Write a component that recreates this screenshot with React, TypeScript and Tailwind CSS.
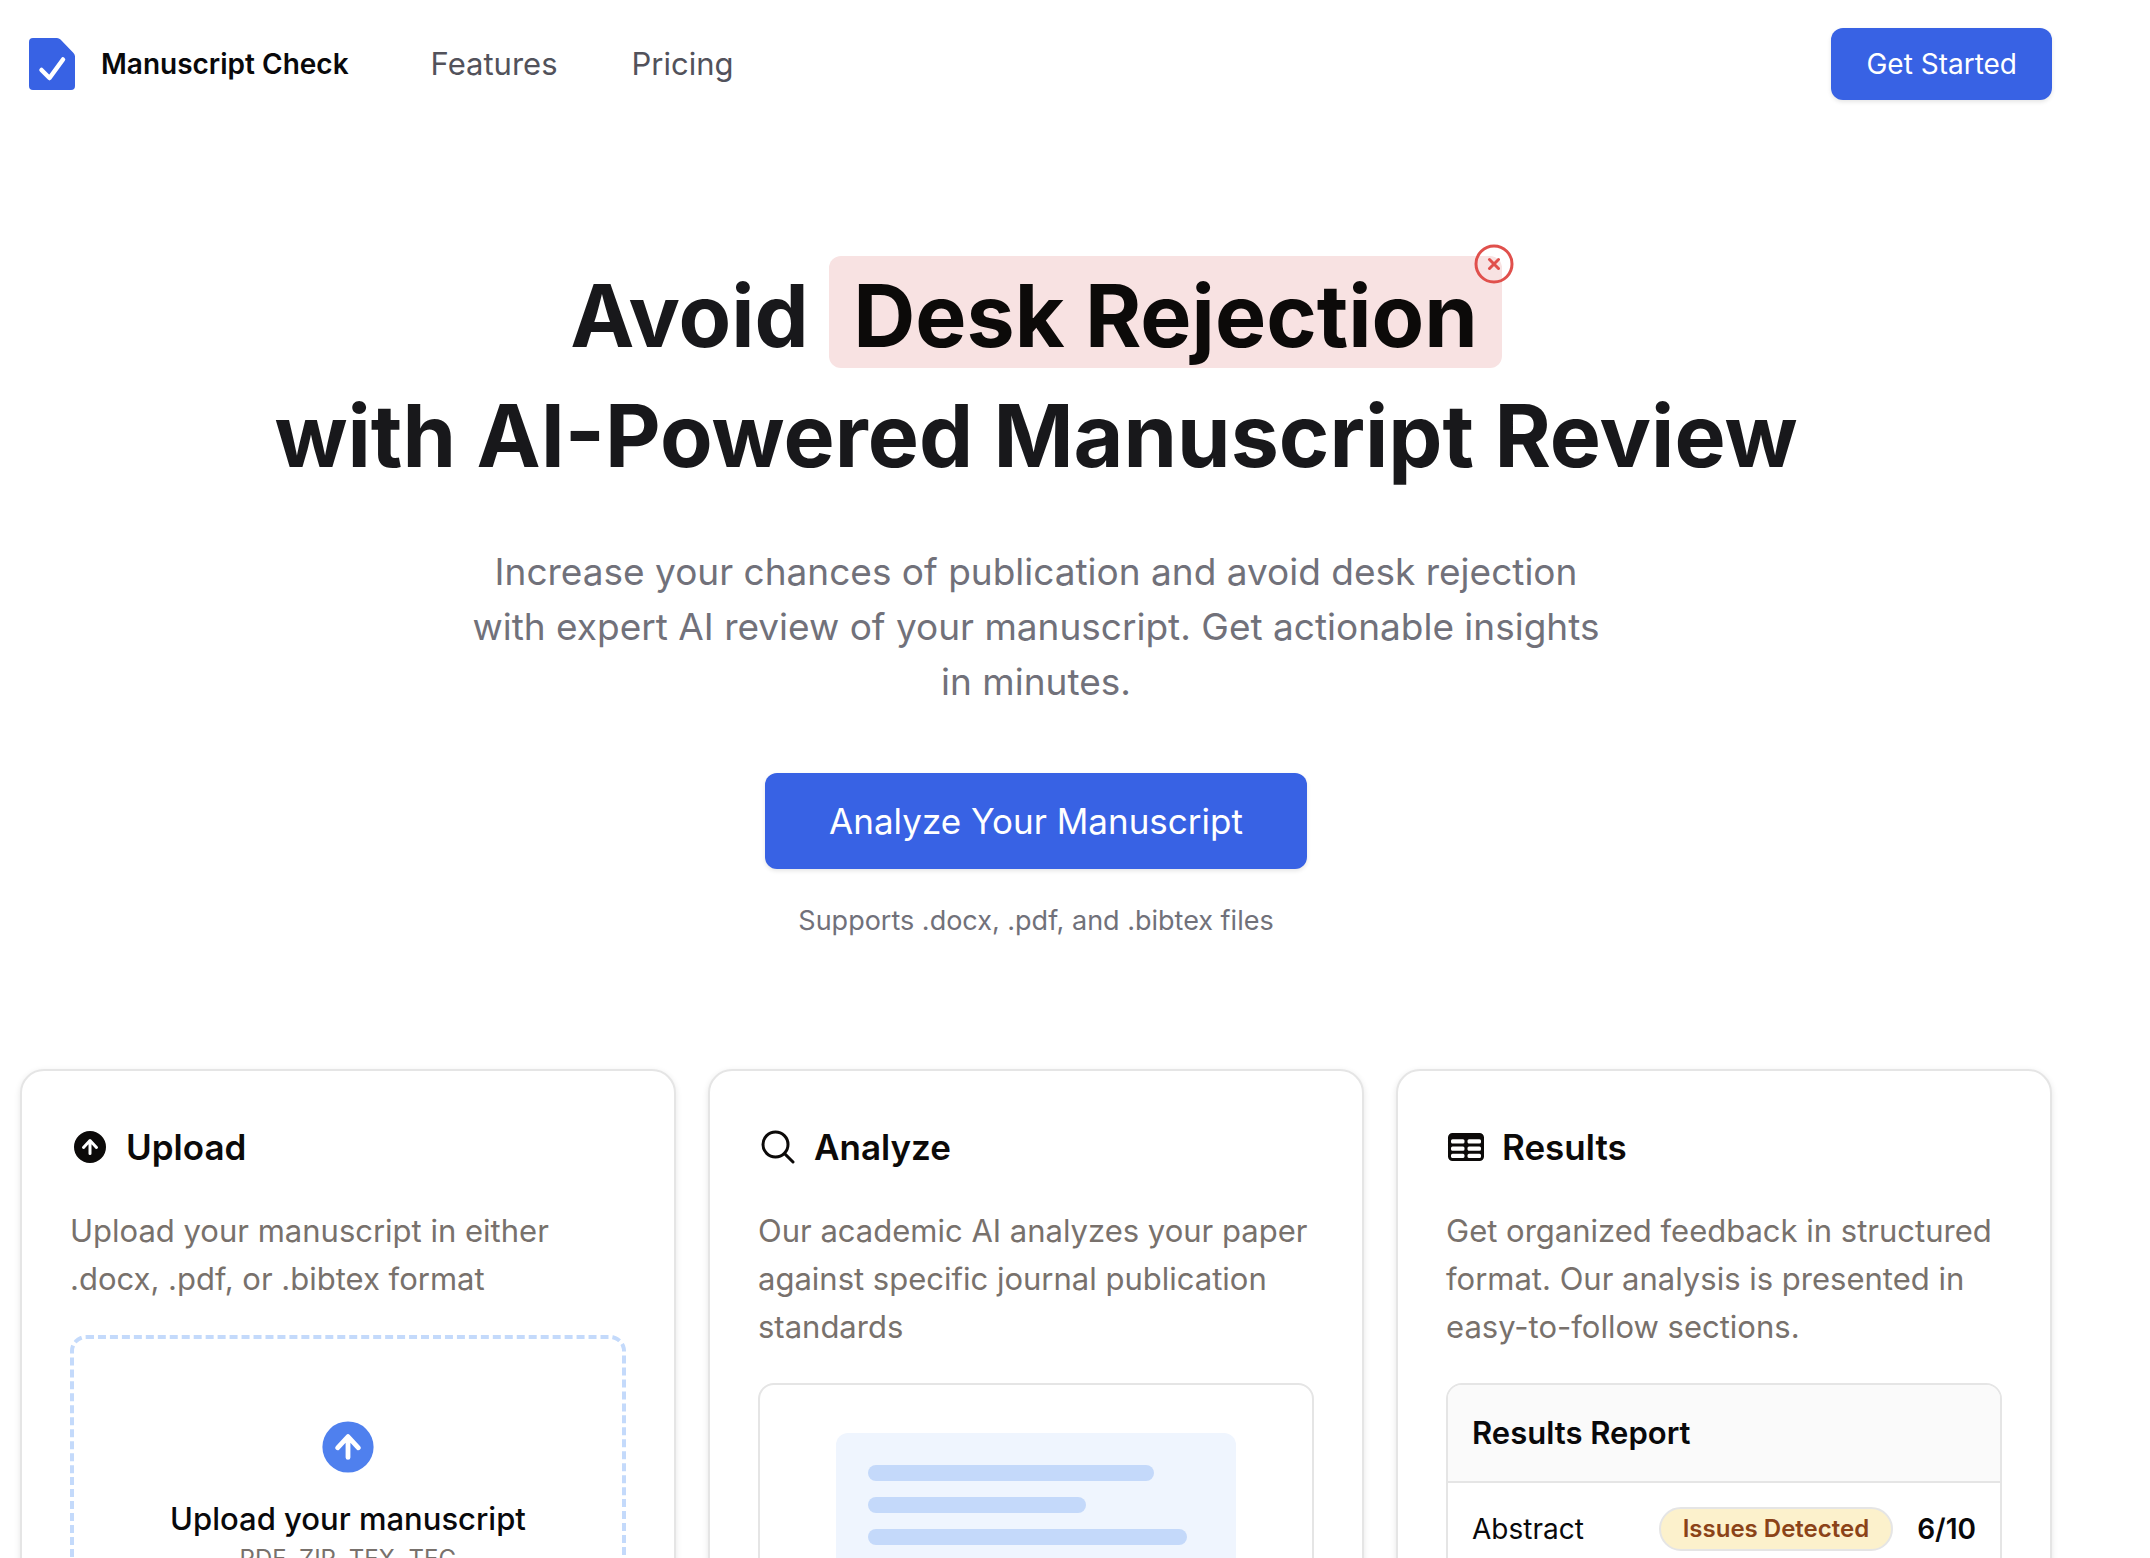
import type { ReactNode } from "react";
import {
  HiMiniArrowUpCircle,
  HiMiniTableCells,
  HiOutlineMagnifyingGlass,
  HiOutlineXCircle,
} from "react-icons/hi2";

function Logo() {
  return (
    <svg viewBox="0 0 46 52" className="h-[52px] w-[46px]" aria-hidden="true">
      <path
        d="M4 0H28Q30 0 31.500 1.500L44.500 15Q46 16.500 46 18.500V48Q46 52 42 52H4Q0 52 0 48V4Q0 0 4 0Z"
        fill="#3862e4"
      />
      <path
        d="M12.500 32L20.500 40L34 21.500"
        fill="none"
        stroke="#fff"
        strokeWidth="4.500"
        strokeLinecap="round"
        strokeLinejoin="round"
      />
    </svg>
  );
}

function Header() {
  return (
    <header className="flex items-center justify-between pt-7 pl-[9px]">
      <div className="flex items-center">
        <a href="#" className="flex items-center gap-[26px] text-[28px] font-semibold text-[#09090b]">
          <Logo />
          Manuscript Check
        </a>
        <nav className="ml-[82px] flex gap-[74px] text-[31px] leading-[44px] text-[#52525b]">
          <a href="#features">Features</a>
          <a href="#pricing">Pricing</a>
        </nav>
      </div>
      <button
        type="button"
        className="h-[72px] rounded-xl bg-[#3862e4] px-[35px] text-[28px] text-white shadow-[0_2px_4px_rgba(0,0,0,0.1)]"
      >
        Get Started
      </button>
    </header>
  );
}

function Hero() {
  return (
    <section className="flex flex-col items-center pt-[156px] text-center">
      <h1 className="text-[86px] leading-[120px] font-bold text-[#18181b]">
        Avoid{" "}
        <span className="relative inline-block rounded-xl bg-[#f8e2e2] px-6 pt-2 leading-[104px] text-[#0c0a09]">
          Desk Rejection
          <HiOutlineXCircle className="absolute -top-4 -right-4 size-12 text-[#e0504c]" />
        </span>
        <br />
        with AI-Powered Manuscript Review
      </h1>
      <p className="mt-12 max-w-[1152px] text-[37px] leading-[55px] text-[#71717a]">
        Increase your chances of publication and avoid desk rejection with expert AI review of your
        manuscript. Get actionable insights in minutes.
      </p>
      <button
        type="button"
        className="mt-16 h-24 rounded-xl bg-[#3862e4] px-16 text-[35px] text-white shadow-[0_2px_4px_rgba(0,0,0,0.1)]"
      >
        Analyze Your Manuscript
      </button>
      <p className="mt-8 text-[27px] leading-10 text-[#71717a]">
        Supports .docx, .pdf, and .bibtex files
      </p>
    </section>
  );
}

interface StepCardProps {
  icon: ReactNode;
  title: string;
  description: string;
  children: ReactNode;
}

function StepCard({ icon, title, description, children }: StepCardProps) {
  return (
    <article className="flex flex-col gap-8 rounded-3xl border-2 border-[#e5e5e5] bg-white p-12 shadow-[0_2px_6px_rgba(0,0,0,0.1)]">
      <h2 className="flex items-center gap-4 text-[35px] leading-[56px] font-semibold text-[#0c0a09]">
        {icon}
        {title}
      </h2>
      <p className="text-[31px] leading-[48px] text-[#78716c]">{description}</p>
      {children}
    </article>
  );
}

function UploadPreview() {
  return (
    <div className="flex flex-col items-center rounded-2xl border-4 border-dashed border-[#c4dafb] py-[76px]">
      <HiMiniArrowUpCircle className="size-16 text-[#4f80ee]" />
      <p className="mt-4 text-[31px] leading-[48px] font-medium text-[#09090b]">
        Upload your manuscript
      </p>
      <p className="text-2xl leading-8 text-[#78716c]">PDF, ZIP, TEX, TEG</p>
    </div>
  );
}

function AnalyzePreview() {
  return (
    <div className="flex justify-center rounded-2xl border-2 border-[#e5e5e5] p-12">
      <div className="flex w-[400px] flex-col gap-4 rounded-xl bg-[#eff5fe] p-8">
        <div className="h-4 w-[85%] rounded-full bg-[#c4d9fa]" />
        <div className="h-4 w-[65%] rounded-full bg-[#c4d9fa]" />
        <div className="h-4 w-[95%] rounded-full bg-[#c4d9fa]" />
      </div>
    </div>
  );
}

function ResultsPreview() {
  return (
    <div className="overflow-hidden rounded-2xl border-2 border-[#e5e5e5] text-[#09090b]">
      <h3 className="border-b-2 border-[#e5e5e5] bg-[#fafafa] p-6 text-[31px] leading-[48px] font-semibold">
        Results Report
      </h3>
      <div className="flex items-center gap-6 p-6 text-[28px] leading-[44px]">
        <span className="grow">Abstract</span>
        <span className="rounded-full border-2 border-[#e5e5e5] bg-[#fcf1cc] px-[22px] text-2xl leading-10 font-semibold text-[#8b4318]">
          Issues Detected
        </span>
        <span className="font-semibold">6/10</span>
      </div>
    </div>
  );
}

export default function App() {
  return (
    <div className="h-screen overflow-hidden bg-white pr-[98px] pl-5 font-['Inter',sans-serif]">
      <Header />
      <main>
        <Hero />
        <section className="mt-32 grid grid-cols-3 items-start gap-8">
          <StepCard
            icon={<HiMiniArrowUpCircle className="size-10" />}
            title="Upload"
            description="Upload your manuscript in either .docx, .pdf, or .bibtex format"
          >
            <UploadPreview />
          </StepCard>
          <StepCard
            icon={<HiOutlineMagnifyingGlass className="size-10" strokeWidth={1.8} />}
            title="Analyze"
            description="Our academic AI analyzes your paper against specific journal publication standards"
          >
            <AnalyzePreview />
          </StepCard>
          <StepCard
            icon={<HiMiniTableCells className="size-10" />}
            title="Results"
            description="Get organized feedback in structured format. Our analysis is presented in easy-to-follow sections."
          >
            <ResultsPreview />
          </StepCard>
        </section>
      </main>
    </div>
  );
}
